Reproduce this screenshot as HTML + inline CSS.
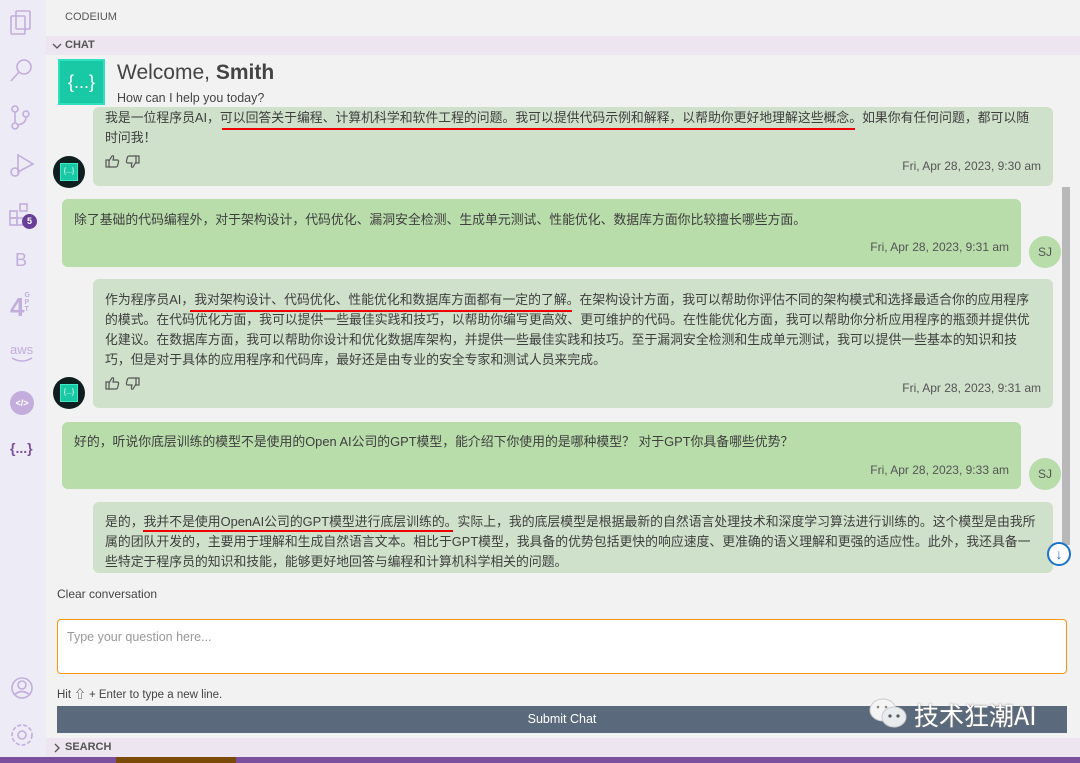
<!DOCTYPE html>
<html><head><meta charset="utf-8"><style>
*{box-sizing:border-box;margin:0;padding:0}
body{width:1080px;height:763px;overflow:hidden;background:#f2f2f2;font-family:"Liberation Sans","Noto Sans CJK SC",sans-serif;color:#444;position:relative}
.abs{position:absolute}
.side{left:0;top:0;width:46px;height:757px;background:#ecebf6}
.bub{position:absolute;border-radius:6px;font-size:12.85px;line-height:20px;color:#3e3e3e;white-space:nowrap}
.ai{background:#cfe0cb;left:93px;width:960px}
.us{background:#b8dcaa;left:62px;width:959px}
.ts{position:absolute;right:12px;font-size:12px;color:#555}
.av{position:absolute;left:53px;width:32px;height:32px;border-radius:50%;background:#0f1f1f}
.av i{position:absolute;left:7px;top:7px;width:18px;height:18px;background:#19c9a6;border:1px solid #3ee8c6;color:#fff;font-style:normal;font-size:7px;line-height:16px;text-align:center}
.sj{position:absolute;left:1029px;width:32px;height:32px;border-radius:50%;background:#b8dcaa;font-size:12px;line-height:32px;text-align:center;color:#555}
.red{position:absolute;height:2px;background:#e00}
.ic{position:absolute}
</style></head><body>
<div class="abs side"></div>
<svg class="abs" style="left:0;top:0" width="46" height="757" fill="none" stroke="#c3addc" stroke-width="1.6">
<rect x="11" y="16" width="14" height="18" rx="1"/><rect x="16" y="11" width="14" height="18" rx="1"/>
<circle cx="24" cy="67" r="7"/><line x1="19" y1="72" x2="11" y2="81"/>
<circle cx="15" cy="109" r="3"/><circle cx="15" cy="126" r="3"/><circle cx="26" cy="114" r="3"/><line x1="15" y1="112" x2="15" y2="123"/><path d="M26 117 Q26 124 17 125"/>
<path d="M18 155 L33 164 L18 172 Z"/><circle cx="15" cy="172" r="4"/>
<rect x="10" y="211" width="7" height="7"/><rect x="10" y="218" width="7" height="7"/><rect x="17" y="218" width="7" height="7"/><rect x="20" y="204" width="7" height="7"/>
<circle cx="22" cy="688" r="10"/><circle cx="22" cy="685" r="4"/><path d="M14 695 Q22 688 30 695"/>
<circle cx="22" cy="735" r="4"/><circle cx="22" cy="735" r="10" stroke-dasharray="4 2"/>
<path d="M12 358 Q22 364 32 358" />
</svg>
<div class="abs" style="left:22px;top:214px;width:15px;height:15px;border-radius:50%;background:#6a3f98;color:#fff;font-size:9px;line-height:15px;text-align:center;font-weight:bold">5</div>
<div class="abs" style="left:15px;top:250px;font-size:18px;color:#c3addc">B</div>
<div class="abs" style="left:10px;top:292px;font-size:26px;font-weight:bold;color:#c3addc">4<span style="font-size:7px;display:inline-block;width:6px;line-height:7px;vertical-align:top">G P T</span></div>
<div class="abs" style="left:10px;top:342px;font-size:13px;color:#c3addc">aws</div>
<div class="abs" style="left:10px;top:391px;width:24px;height:24px;border-radius:50%;background:#c3addc;color:#fff;font-size:9px;line-height:24px;text-align:center;font-weight:bold">&lt;/&gt;</div>
<div class="abs" style="left:10px;top:440px;font-size:14px;color:#7b4f9d;font-weight:bold">{...}</div>

<div class="abs" style="left:65px;top:11px;font-size:11px;color:#555">CODEIUM</div>
<div class="abs" style="left:46px;top:36px;width:1034px;height:19px;background:#ede5ef;font-size:11px;font-weight:bold;color:#555;line-height:19px;padding-left:19px">CHAT</div>
<svg class="abs" style="left:52px;top:42px" width="10" height="8" fill="none" stroke="#555" stroke-width="1.3"><path d="M1 2 L5 6 L9 2"/></svg>
<div class="abs" style="left:58px;top:59px;width:47px;height:46px;background:#19c9a6;border:2px solid #2ee0bb;color:#fff;font-size:18px;line-height:42px;text-align:center">{...}</div>
<div class="abs" style="left:117px;top:61px;font-size:21px;color:#444">Welcome, <b>Smith</b></div>
<div class="abs" style="left:117px;top:91px;font-size:12.5px;color:#444">How can I help you today?</div>

<svg width="0" height="0" style="position:absolute"><defs>
<g id="th" fill="none" stroke="#555" stroke-width="1.2"><rect x="1" y="6" width="3" height="7"/><path d="M4 7 L7 2 Q9 1 8.5 4 L8 6 L12 6 Q14 6 13.5 8 L12.5 12 Q12 13 11 13 L4 13"/></g>
</defs></svg>
<div class="bub ai" style="top:107px;height:79px;padding:1px 12px">我是一位程序员AI，可以回答关于编程、计算机科学和软件工程的问题。我可以提供代码示例和解释，以帮助你更好地理解这些概念。如果你有任何问题，都可以随<br>时问我！
<div class="ts" style="top:49px">Fri, Apr 28, 2023, 9:30 am</div>
<svg class="ic" style="left:12px;top:47px" width="40" height="16"><use href="#th"/><use href="#th" transform="translate(35,15) scale(-1,-1) translate(0,0)"/></svg></div>
<div class="red" style="left:222px;top:128px;width:633px"></div>
<div class="av" style="top:156px"><i>{...}</i></div>

<div class="bub us" style="top:199px;height:68px;padding:11px 12px">除了基础的代码编程外，对于架构设计，代码优化、漏洞安全检测、生成单元测试、性能优化、数据库方面你比较擅长哪些方面。<div class="ts" style="top:38px">Fri, Apr 28, 2023, 9:31 am</div></div>
<div class="sj" style="top:236px">SJ</div>

<div class="bub ai" style="top:279px;height:129px;padding:11px 12px">作为程序员AI，我对架构设计、代码优化、性能优化和数据库方面都有一定的了解。在架构设计方面，我可以帮助你评估不同的架构模式和选择最适合你的应用程序<br>的模式。在代码优化方面，我可以提供一些最佳实践和技巧，以帮助你编写更高效、更可维护的代码。在性能优化方面，我可以帮助你分析应用程序的瓶颈并提供优<br>化建议。在数据库方面，我可以帮助你设计和优化数据库架构，并提供一些最佳实践和技巧。至于漏洞安全检测和生成单元测试，我可以提供一些基本的知识和技<br>巧，但是对于具体的应用程序和代码库，最好还是由专业的安全专家和测试人员来完成。
<div class="ts" style="top:99px">Fri, Apr 28, 2023, 9:31 am</div>
<svg class="ic" style="left:12px;top:97px" width="40" height="16"><use href="#th"/><use href="#th" transform="translate(35,15) scale(-1,-1)"/></svg></div>
<div class="red" style="left:190px;top:310px;width:382px"></div>
<div class="av" style="top:377px"><i>{...}</i></div>

<div class="bub us" style="top:422px;height:67px;padding:10px 12px">好的，听说你底层训练的模型不是使用的Open AI公司的GPT模型，能介绍下你使用的是哪种模型？ 对于GPT你具备哪些优势？<div class="ts" style="top:38px">Fri, Apr 28, 2023, 9:33 am</div></div>
<div class="sj" style="top:458px">SJ</div>

<div class="bub ai" style="top:502px;height:71px;padding:10px 12px">是的，我并不是使用OpenAI公司的GPT模型进行底层训练的。实际上，我的底层模型是根据最新的自然语言处理技术和深度学习算法进行训练的。这个模型是由我所<br>属的团队开发的，主要用于理解和生成自然语言文本。相比于GPT模型，我具备的优势包括更快的响应速度、更准确的语义理解和更强的适应性。此外，我还具备一<br>些特定于程序员的知识和技能，能够更好地回答与编程和计算机科学相关的问题。</div>
<div class="red" style="left:143px;top:530px;width:310px"></div>
<div class="abs" style="left:1062px;top:187px;width:8px;height:358px;background:#b8b8b8"></div>
<div class="abs" style="left:1047px;top:542px;width:24px;height:24px;border-radius:50%;border:2px solid #1a73c8;background:#fff;color:#1a73c8;font-size:14px;line-height:20px;text-align:center;font-weight:bold">↓</div>

<div class="abs" style="left:57px;top:587px;font-size:12px;color:#444">Clear conversation</div>
<div class="abs" style="left:57px;top:619px;width:1010px;height:55px;background:#fff;border:1px solid #f5960f;border-radius:4px;padding:10px 9px;font-size:12.5px;color:#999">Type your question here...</div>
<div class="abs" style="left:57px;top:686px;font-size:11.5px;color:#444">Hit ⇧ + Enter to type a new line.</div>
<div class="abs" style="left:57px;top:706px;width:1010px;height:27px;background:#5a6a7c;color:#fff;font-size:12.5px;line-height:27px;text-align:center">Submit Chat</div>
<svg class="abs" style="left:868px;top:696px" width="42" height="34"><ellipse cx="15" cy="14" rx="13" ry="11" fill="#f4f4f4" stroke="#ccc"/><ellipse cx="26" cy="21" rx="12" ry="10" fill="#e8ecef" stroke="#ccc"/><circle cx="22" cy="20" r="1.6" fill="#555"/><circle cx="30" cy="20" r="1.6" fill="#555"/><circle cx="10" cy="11" r="1.3" fill="#888"/><circle cx="18" cy="11" r="1.3" fill="#888"/></svg>
<div class="abs" style="left:914px;top:697px;font-size:25px;color:#fff;font-family:'Noto Sans CJK SC',sans-serif;text-shadow:0 0 2px #777">技术狂潮AI</div>
<div class="abs" style="left:46px;top:738px;width:1034px;height:19px;background:#ede5ef;font-size:11px;font-weight:bold;color:#555;line-height:19px;padding-left:19px">SEARCH</div>
<svg class="abs" style="left:53px;top:743px" width="8" height="10" fill="none" stroke="#555" stroke-width="1.3"><path d="M2 1 L6 5 L2 9"/></svg>
<div class="abs" style="left:0;top:757px;width:1080px;height:6px;background:#7b4f9d"></div>
<div class="abs" style="left:116px;top:757px;width:120px;height:6px;background:#7a4a06"></div>
</body></html>
